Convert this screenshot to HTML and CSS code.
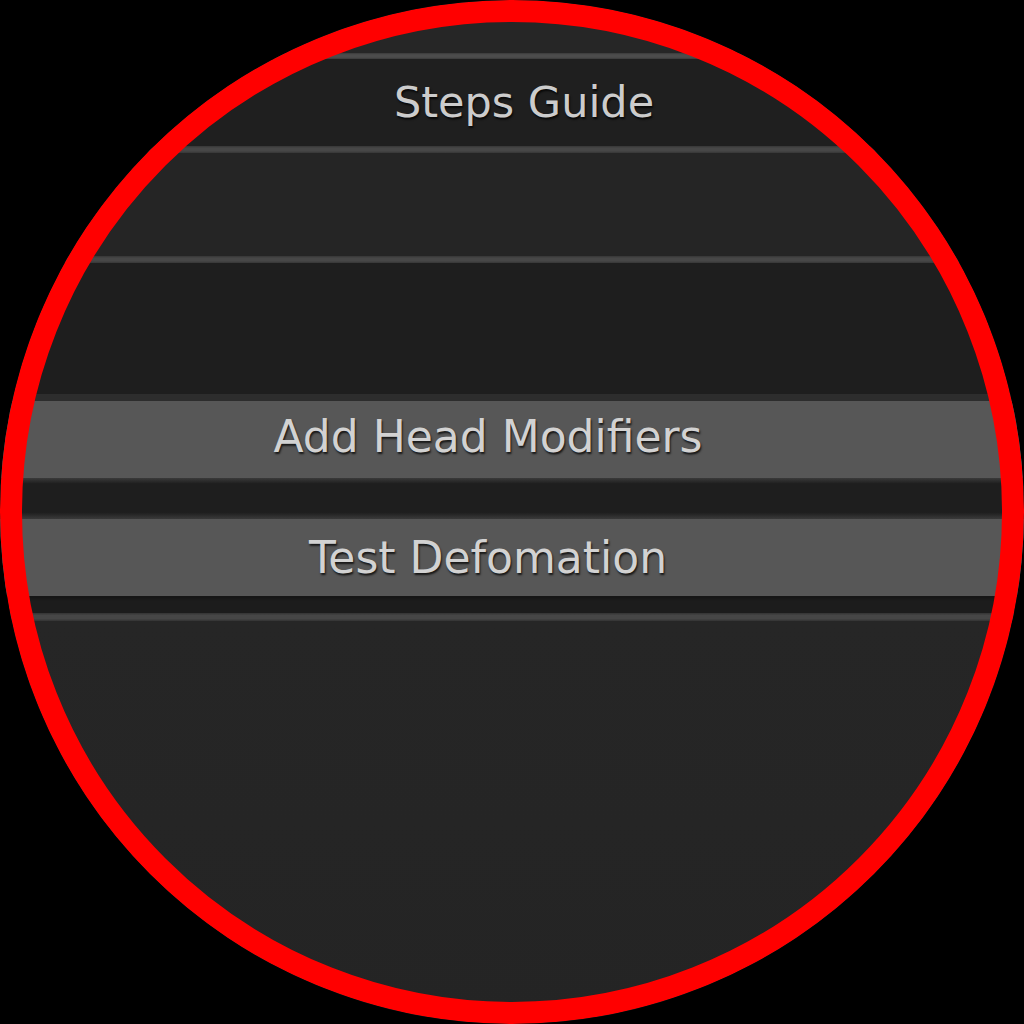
FILE: index.html
```html
<!DOCTYPE html>
<html>
<head>
<meta charset="utf-8">
<link rel="stylesheet" href="styles.css">
</head>
<body>
<div class="lens">
  <div class="panel">
    <div class="band band-top"></div>
    <div class="rule"></div>
    <div class="header"><span class="label">Steps Guide</span></div>
    <div class="rule rule-b"></div>
    <div class="band band-mid"></div>
    <div class="rule rule-b"></div>
    <div class="band band-dark"></div>
    <div class="btn-wrap">
      <div class="btn btn-first"><span class="label">Add Head Modifiers</span></div>
      <div class="btn-gap"></div>
      <div class="btn"><span class="label">Test Defomation</span></div>
    </div>
    <div class="rule rule-c"></div>
    <div class="band band-bottom"></div>
  </div>
</div>
</body>
</html>
```
FILE: styles.css
```css
html, body {
  margin: 0;
  padding: 0;
  background: #000;
  width: 1024px;
  height: 1024px;
  overflow: hidden;
}

.lens {
  position: relative;
  width: 1024px;
  height: 1024px;
  border-radius: 50%;
  overflow: hidden;
  background: #000;
}

.lens::after {
  content: "";
  position: absolute;
  left: 0;
  top: 0;
  width: 1024px;
  height: 1024px;
  box-sizing: border-box;
  border: 22px solid #ff0000;
  border-radius: 50%;
}

.panel {
  display: flex;
  flex-direction: column;
  width: 1024px;
  height: 1024px;
  font-family: "DejaVu Sans", "Liberation Sans", sans-serif;
}

.label {
  font-size: 44px;
  color: #d2d2d2;
  text-shadow: 1px 2px 2px rgba(0, 0, 0, 0.75);
  white-space: nowrap;
}

.band-top {
  height: 53px;
  background: #262626;
}

.rule {
  height: 6px;
  background: linear-gradient(#3a3a3a, #4c4c4c 30%, #4c4c4c 70%, #3a3a3a);
}

.rule-b {
  height: 7px;
  background: linear-gradient(#363636, #474747 30%, #474747 70%, #363636);
}

.header {
  height: 87px;
  background: #1f1f1f;
  display: flex;
  align-items: center;
  justify-content: center;
  padding-left: 24px;
  line-height: 87px;
}

.header .label {
  font-size: 43px;
  color: #cccccc;
}

.band-mid {
  height: 103px;
  background: #252525;
}

.band-dark {
  height: 131px;
  background: #1e1e1e;
}

.btn-wrap {
  display: flex;
  flex-direction: column;
  background: #1d1d1d;
  border-top: 7px solid #2d2d2d;
  padding-bottom: 5px;
}

.btn {
  height: 77px;
  background: #575757;
  display: flex;
  align-items: center;
  justify-content: center;
  padding-right: 48px;
  line-height: 77px;
  box-shadow: 0 3px 3px rgba(0, 0, 0, 0.25);
}

.btn-first .label {
  position: relative;
  top: -3px;
}

.btn-gap {
  height: 41px;
  background: linear-gradient(#3a3a3a, #1e1e1e 14%, #1e1e1e 84%, #3a3a3a);
}

.rule-c {
  height: 8px;
  background: linear-gradient(#333333, #464646 30%, #464646 70%, #333333);
}

.btn-wrap + .rule-c {
  border-top: 12px solid #1c1c1c;
}

.band-bottom {
  flex: 1;
  background: linear-gradient(#262626, #242424);
}
```
